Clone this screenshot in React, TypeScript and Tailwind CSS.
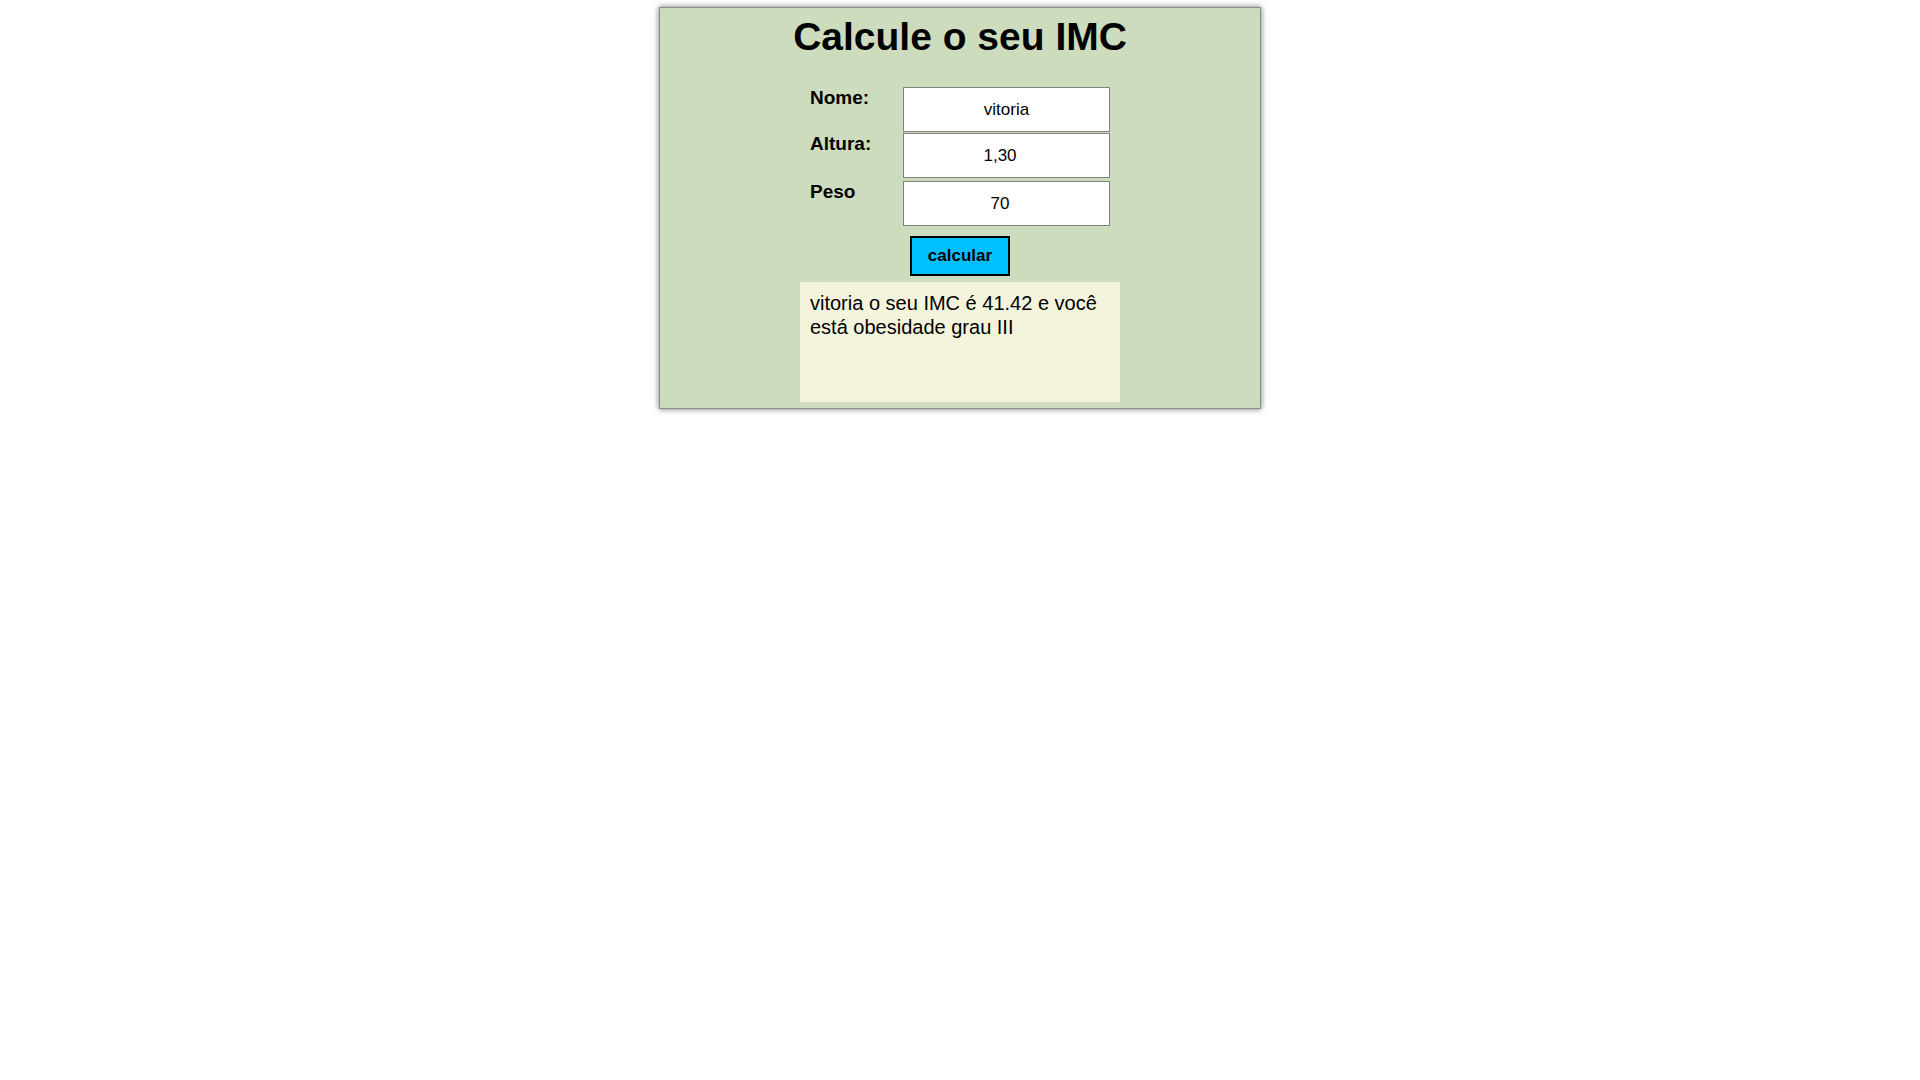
export default function App() {
  return (
    <div className="min-h-screen bg-white font-['Liberation_Sans',Arial,sans-serif] text-black">
      <div className="mx-auto mt-[7px] h-[402px] w-[602px] border border-[#8a8a8a] bg-[#cddcbd] shadow-[0_0_6px_rgba(0,0,0,0.55)]">
        <h1 className="mt-[6px] text-center text-[39px] font-bold leading-[45px]">Calcule o seu IMC</h1>

        <div className="mx-auto mt-[28px] grid w-[300px] grid-cols-[93px_207px] pr-[2px]">
          <label className="text-[19px] font-bold leading-[22px]">Nome:</label>
          <input
            type="text"
            defaultValue="vitoria"
            className="h-[45px] w-[207px] border border-[#808080] bg-white text-center text-[17px] outline-none"
          />
          <label className="mt-[1px] text-[19px] font-bold leading-[22px]">Altura:</label>
          <input
            type="text"
            defaultValue="1,30"
            className="mt-[1px] h-[45px] w-[207px] border border-[#808080] bg-white pr-[13px] text-center text-[17px] outline-none"
          />
          <label className="mt-[3px] text-[19px] font-bold leading-[22px]">Peso</label>
          <input
            type="text"
            defaultValue="70"
            className="mt-[3px] h-[45px] w-[207px] border border-[#808080] bg-white pr-[13px] text-center text-[17px] outline-none"
          />
        </div>

        <div className="mt-[10px] flex justify-center">
          <button className="h-[40px] w-[100px] border-2 border-black bg-[#00bfff] text-[17px] font-bold">
            calcular
          </button>
        </div>

        <div className="mx-auto mt-[6px] h-[120px] w-[320px] bg-[#f4f4dc] px-[10px] pt-[9px] text-[20px] leading-[24px]">
          vitoria o seu IMC é 41.42 e você está obesidade grau III
        </div>
      </div>
    </div>
  );
}
